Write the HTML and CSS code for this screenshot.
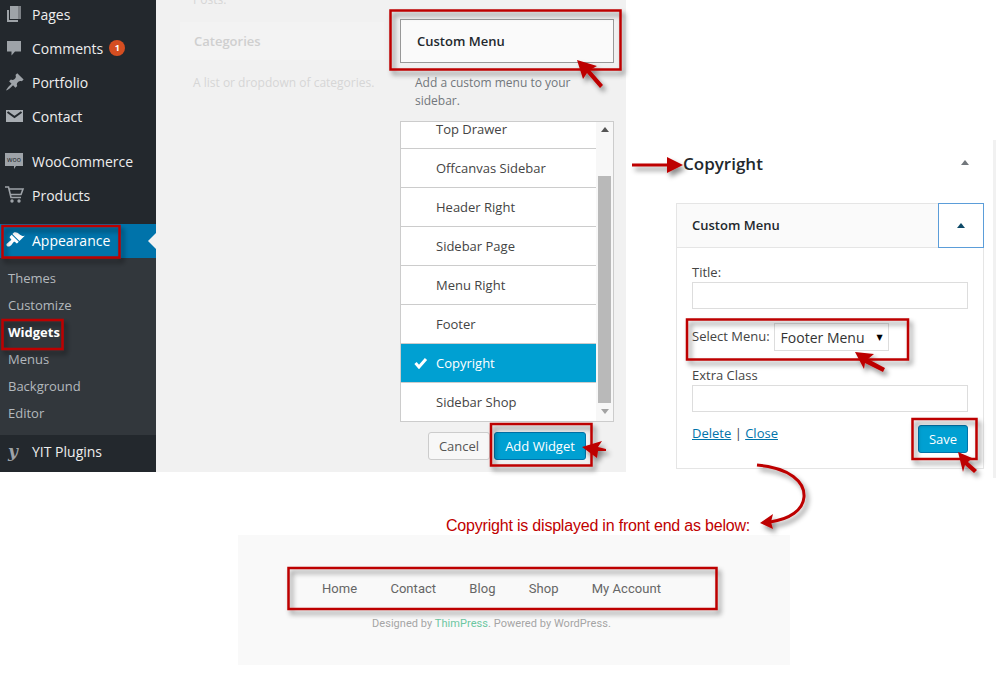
FILE: index.html
```html
<!DOCTYPE html>
<html>
<head>
  <title>Custom Menu widget</title>
  <link rel="stylesheet" href="styles.css">
</head>
<body>
<div class="page">

  <div class="top">
    <div class="sidebar">
      <ul class="menu">
        <li class="item"><span class="icon"><svg width="20" height="20" viewBox="0 0 20 20"><path d="M2 6h2v10h9v2H2z" fill="#9ea3a8"/><path d="M5 2h8v13H5z" fill="#9ea3a8"/><path d="M13 2h3v13h-3z" fill="#7d8186"/></svg></span>Pages</li>
        <li class="item"><span class="icon"><svg width="20" height="20" viewBox="0 0 20 20"><path d="M2 3h14v10.500H10l-3.500 4v-4H2z" fill="#9ea3a8"/></svg></span>Comments<span class="badge">1</span></li>
        <li class="item"><span class="icon"><svg width="20" height="20" viewBox="0 0 20 20"><path d="M10.440 3.020l1.820-1.820 6.360 6.350-1.830 1.820c-1.050-.68-2.480-.57-3.410.36l-.75.75c-.92.93-1.040 2.350-.35 3.410l-1.830 1.820-2.410-2.410-2.800 2.790c-.42.42-3.380 2.710-3.800 2.290s1.860-3.390 2.280-3.810l2.790-2.790L4.100 9.360l1.830-1.820c1.050.69 2.480.57 3.410-.36l.75-.75c.93-.92 1.040-2.350.35-3.410z" fill="#9ea3a8"/></svg></span>Portfolio</li>
        <li class="item"><span class="icon"><svg width="20" height="20" viewBox="0 0 20 20"><path d="M1 4h17v12H1z" fill="#a8adb2"/><path d="M2.500 6l7 5 7-5" fill="none" stroke="#23282d" stroke-width="2"/></svg></span>Contact</li>
        <li class="item item-gap"><span class="icon"><svg width="20" height="20" viewBox="0 0 20 20"><path d="M0 2h18v13h-7l-2 3v-3H0z" fill="#9ea3a8"/><text x="9" y="11" class="woo-text">woo</text></svg></span>WooCommerce</li>
        <li class="item"><span class="icon"><svg width="20" height="20" viewBox="0 0 20 20"><path d="M0 2h3.500l2.500 10.500h10M4.500 4H18l-2 5.500H5.500" fill="none" stroke="#9ea3a8" stroke-width="1.600"/><circle cx="7" cy="16" r="1.700" fill="#9ea3a8"/><circle cx="14" cy="16" r="1.700" fill="#9ea3a8"/></svg></span>Products</li>
      </ul>
      <div class="item item-low item-current"><span class="icon"><svg width="20" height="20" viewBox="0 0 20 20"><path d="M14.480 11.060L7.410 3.990l1.500-1.500c.5-.56 2.300-.47 3.510.32 1.210.8 1.430 1.280 2.910 2.100 1.180.64 2.450 1.260 4.450.85zm-.71.71L6.700 4.700 4.930 6.470c-.39.39-.39 1.020 0 1.410l1.060 1.060c.39.39.39 1.030 0 1.420-.6.6-1.430 1.110-2.210 1.690-.35.26-.7.53-1.010.84C1.430 13.230.88 14.940 2 16.030c1.100 1.100 2.800.56 4.140-.78.31-.31.58-.66.84-1.010.58-.78 1.090-1.610 1.690-2.210.39-.39 1.020-.39 1.410 0l1.060 1.060c.39.39 1.020.39 1.410 0z" fill="#fff"/></svg></span>Appearance</div>
      <ul class="submenu">
        <li>Themes</li>
        <li>Customize</li>
        <li class="sub-current">Widgets</li>
        <li>Menus</li>
        <li>Background</li>
        <li>Editor</li>
      </ul>
      <div class="item item-low"><span class="icon icon-yit">y</span>YIT Plugins</div>
    </div>

    <div class="widgets">
      <div class="available">
        <p class="faded-text">Posts.</p>
        <div class="faded-card">Categories</div>
        <p class="faded-text faded-desc">A list or dropdown of categories.</p>
      </div>
      <div class="chooser-col">
        <div class="widget-title">Custom Menu</div>
        <p class="widget-desc">Add a custom menu to your sidebar.</p>
        <div class="chooser">
          <ul class="rows">
            <li class="row row-first">Top Drawer</li>
            <li class="row">Offcanvas Sidebar</li>
            <li class="row">Header Right</li>
            <li class="row">Sidebar Page</li>
            <li class="row">Menu Right</li>
            <li class="row">Footer</li>
            <li class="row row-selected"><svg class="check" width="14" height="12" viewBox="0 0 14 12"><path d="M1.500 6l3.500 4 7-8" fill="none" stroke="#fff" stroke-width="3"/></svg>Copyright</li>
            <li class="row row-last">Sidebar Shop</li>
          </ul>
          <div class="scrollbar">
            <span class="arrow-up"></span>
            <span class="thumb"></span>
            <span class="arrow-down"></span>
          </div>
        </div>
        <div class="chooser-actions">
          <button class="btn">Cancel</button>
          <button class="btn btn-primary btn-add">Add Widget</button>
        </div>
      </div>
    </div>

    <div class="editor">
      <div class="sidebar-head">
        <h2>Copyright</h2>
        <span class="arrow-up arrow-head"></span>
      </div>
      <div class="card">
        <div class="card-head">
          <span class="card-title">Custom Menu</span>
          <span class="card-toggle"><span class="arrow-up arrow-dark"></span></span>
        </div>
        <div class="card-body">
          <label class="field-label">Title:</label>
          <div class="input"></div>
          <div class="select-row">
            <label>Select Menu:</label>
            <div class="select">Footer Menu<span class="caret">&#9660;</span></div>
          </div>
          <label class="field-label field-extra">Extra Class</label>
          <div class="input"></div>
          <div class="card-foot">
            <span class="links"><a href="#">Delete</a> | <a href="#">Close</a></span>
            <button class="btn btn-primary btn-save">Save</button>
          </div>
        </div>
      </div>
    </div>
  </div>

  <p class="caption">Copyright is displayed in front end as below:</p>

  <div class="front">
    <ul class="front-nav">
      <li>Home</li>
      <li>Contact</li>
      <li>Blog</li>
      <li>Shop</li>
      <li>My Account</li>
    </ul>
    <p class="front-credit">Designed by <span class="thim">ThimPress</span>. Powered by WordPress.</p>
  </div>

  <!-- red marks drawn over the screenshot -->
  <svg class="marks" width="1004" height="683" viewBox="0 0 1004 683">
    <defs>
      <filter id="shade" x="-20%" y="-20%" width="140%" height="140%">
        <feDropShadow dx="3" dy="4" stdDeviation="2.500" flood-color="#000" flood-opacity="0.45"/>
      </filter>
    </defs>
    <g filter="url(#shade)">
      <g class="frame">
        <rect x="390.500" y="10.500" width="230" height="59"/>
        <rect x="2.500" y="226" width="117" height="31.500"/>
        <rect x="2.500" y="320" width="60" height="29"/>
        <rect x="491" y="424" width="100.500" height="41.500"/>
        <rect x="687" y="319.500" width="221" height="40"/>
        <rect x="912.500" y="419" width="64" height="40"/>
        <rect x="288.500" y="568" width="428" height="41"/>
      </g>
      <g class="pointer">
        <path d="M577 60L597 66 590 70 603 85 600 88 587 73 583 79z"/>
        <path d="M582 447L602 441 598 447 606 449 606 451 598 451 597 458z"/>
        <path d="M632 163.500H667V157L683 165 667 173V166.500H632z"/>
        <path d="M855 352L874 354 868 359 885 368 883 372 865 363 864 369z"/>
        <path d="M958 452L972 458 968 462 977 470 974 473 965 465 963 472z"/>
        <path d="M760 523L773 514 771 522 773 529z"/>
      </g>
      <path class="curve" d="M757 465C790 468 805 482 804 497 803 510 790 519 770 522"/>
    </g>
  </svg>

</div>
</body>
</html>
```

FILE: styles.css
```css
body {
    margin: 0;
    background: #fff;
    font-family: "Open Sans", sans-serif;
    font-size: 13px;
    color: #444;
}

ul {
    margin: 0;
    padding: 0;
    list-style: none;
}

p {
    margin: 0;
}

.page {
    position: relative;
    width: 1004px;
    height: 683px;
    overflow: hidden;
}

.top {
    display: flex;
    align-items: flex-start;
    height: 478px;
}

/* admin menu */
.sidebar {
    width: 156px;
    height: 472px;
    overflow: hidden;
    flex-shrink: 0;
    background: #23282d;
}

.menu {
    margin-top: -3px;
    margin-bottom: 12px;
}

.item {
    display: flex;
    align-items: center;
    box-sizing: border-box;
    height: 34px;
    padding-left: 5px;
    font-size: 14px;
    color: #eee;
}

.item-gap {
    margin-top: 11px;
}

.item-low {
    padding-bottom: 2px;
}

.item-current {
    position: relative;
    background: #0073aa;
    color: #fff;
}

.item-current:after {
    content: "";
    position: absolute;
    right: 0;
    top: 9px;
    border: 8px solid transparent;
    border-right-color: #f1f1f1;
    border-left-width: 0;
}

.icon {
    display: flex;
    width: 27px;
    flex-shrink: 0;
}

.icon-yit {
    box-sizing: border-box;
    width: 23px;
    margin-right: 4px;
    padding-left: 3px;
    font-family: "DejaVu Serif", serif;
    font-style: italic;
    font-weight: bold;
    font-size: 17px;
    color: #9ea3a8;
}

.woo-text {
    font-family: "Open Sans", sans-serif;
    font-size: 7px;
    text-anchor: middle;
    fill: #23282d;
}

.badge {
    width: 16px;
    height: 16px;
    margin-left: 6px;
    border-radius: 50%;
    background: #d54e21;
    color: #fff;
    font-size: 9px;
    font-weight: 700;
    line-height: 16px;
    text-align: center;
}

.submenu {
    padding: 7px 0 8px 8px;
    background: #32373c;
    color: #b4b9be;
}

.submenu li {
    height: 27px;
    line-height: 27px;
}

.submenu .sub-current {
    color: #fff;
    font-weight: 700;
}

/* widgets screen */
.widgets {
    display: flex;
    width: 470px;
    height: 472px;
    flex-shrink: 0;
    box-sizing: border-box;
    padding-left: 24px;
    overflow: hidden;
    background: #f1f1f1;
}

.available {
    width: 204px;
    margin-right: 16px;
    flex-shrink: 0;
}

.faded-text {
    margin-top: -10px;
    padding-left: 13px;
    font-size: 12px;
    line-height: 20px;
    color: #d6d6d6;
}

.faded-desc {
    margin-top: 13px;
}

.faded-card {
    height: 38px;
    margin-top: 12px;
    padding-left: 14px;
    background: #f3f3f3;
    line-height: 38px;
    font-weight: 600;
    color: #cfcfcf;
}

.chooser-col {
    width: 214px;
    margin-top: 19px;
    flex-shrink: 0;
}

.widget-title {
    box-sizing: border-box;
    height: 44px;
    padding-left: 16px;
    border: 1px solid #999;
    background: #fafafa;
    line-height: 42px;
    font-weight: 600;
    color: #23282d;
}

.widget-desc {
    width: 190px;
    margin: 11px 0 11px 15px;
    font-size: 12px;
    line-height: 18px;
    color: #72777c;
}

.chooser {
    display: flex;
    height: 301px;
    box-sizing: border-box;
    border: 1px solid #ccc;
    background: #fff;
}

.rows {
    width: 195px;
}

.row {
    position: relative;
    box-sizing: border-box;
    height: 39px;
    padding-left: 35px;
    border-bottom: 1px solid #ccc;
    line-height: 38px;
}

.row-first {
    height: 27px;
    line-height: 14px;
}

.row-last {
    border-bottom: 0;
}

.row-selected {
    background: #00a0d2;
    color: #fff;
}

.check {
    position: absolute;
    left: 13px;
    top: 13px;
}

.scrollbar {
    display: flex;
    flex-direction: column;
    align-items: center;
    width: 17px;
    padding-top: 5px;
    background: #f7f7f7;
}

.arrow-up,
.arrow-down {
    width: 0;
    height: 0;
    border-left: 4px solid transparent;
    border-right: 4px solid transparent;
}

.arrow-up {
    border-bottom: 5px solid #555;
}

.arrow-down {
    border-top: 5px solid #a3a3a3;
}

.thumb {
    width: 13px;
    height: 227px;
    margin: 44px 0 6px;
    background: #b9b9b9;
}

.chooser-actions {
    display: flex;
    justify-content: flex-end;
    gap: 4px;
    margin-top: 10px;
    padding-right: 28px;
}

.btn {
    box-sizing: border-box;
    height: 28px;
    padding: 0;
    border: 1px solid #ccc;
    border-radius: 3px;
    background: #f7f7f7;
    font-family: "Open Sans", sans-serif;
    font-size: 13px;
    color: #555;
}

.chooser-actions .btn {
    width: 62px;
}

.chooser-actions .btn-add {
    width: 92px;
}

.btn-primary {
    border-color: #0073aa;
    background: #00a0d2;
    color: #fff;
}

.chooser-actions .btn-primary {
    color: #fff;
}

.btn-save {
    width: 50px;
}

/* sidebar area on the right */
.editor {
    box-sizing: border-box;
    width: 320px;
    height: 338px;
    margin: 140px 0 0 50px;
    padding-top: 14px;
    border-right: 3px solid #f1f1f1;
}

.sidebar-head {
    display: flex;
    justify-content: space-between;
    align-items: center;
    width: 286px;
    height: 20px;
    margin-bottom: 29px;
    padding-left: 7px;
}

.sidebar-head h2 {
    margin: 0;
    font-size: 17px;
    font-weight: 600;
    line-height: 20px;
    color: #23282d;
}

.arrow-head {
    margin-top: -4px;
    border-bottom-color: #72777c;
}

.card {
    box-sizing: border-box;
    width: 308px;
    height: 266px;
    border: 1px solid #e5e5e5;
}

.card-head {
    display: flex;
    justify-content: space-between;
    height: 43px;
    border-bottom: 1px solid #e5e5e5;
    background: #fafafa;
}

.card-title {
    padding-left: 15px;
    line-height: 43px;
    font-weight: 600;
    color: #23282d;
}

.card-toggle {
    display: flex;
    justify-content: center;
    align-items: center;
    box-sizing: border-box;
    width: 46px;
    height: 45px;
    margin-right: -1px;
    margin-top: -1px;
    border: 1px solid #5b9dd9;
    background: #fff;
}

.arrow-dark {
    border-bottom-color: #0e4a68;
}

.card-body {
    padding: 15px 15px 0;
}

.field-label {
    display: block;
    margin-bottom: 1px;
    line-height: 18px;
}

.field-extra {
    margin-top: 15px;
}

.input {
    box-sizing: border-box;
    width: 276px;
    height: 27px;
    border: 1px solid #ddd;
}

.select-row {
    display: flex;
    align-items: center;
    margin-top: 14px;
}

.select-row label {
    margin-right: 4px;
    margin-top: -2px;
}

.select {
    display: flex;
    justify-content: space-between;
    box-sizing: border-box;
    width: 115px;
    height: 28px;
    padding: 0 5px 0 6px;
    border: 1px solid #ddd;
    line-height: 27px;
    font-size: 14px;
    color: #333;
}

.caret {
    font-family: "DejaVu Sans", sans-serif;
    font-size: 8px;
    line-height: 28px;
    color: #000;
}

.card-foot {
    display: flex;
    justify-content: space-between;
    align-items: flex-start;
    margin-top: 13px;
}

.links {
    line-height: 16px;
}

.links a {
    color: #0073aa;
}

/* front end preview */
.caption {
    margin: 39px 0 0 446px;
    font-family: "Liberation Sans", Arial, sans-serif;
    font-size: 16px;
    letter-spacing: -0.200px;
    line-height: 18px;
    color: #c00000;
}

.front {
    box-sizing: border-box;
    width: 552px;
    height: 130px;
    margin-left: 238px;
    padding: 45px 0 0 84px;
    background: #f9f9f9;
}

.front-nav {
    display: flex;
    gap: 33.200px;
    font-family: Roboto, sans-serif;
    font-size: 13px;
    letter-spacing: 0.050px;
    line-height: 18px;
    color: #666;
}

.front-credit {
    margin: 18px 0 0 50px;
    font-family: Roboto, sans-serif;
    font-size: 11px;
    letter-spacing: 0.050px;
    line-height: 16px;
    color: #a5a5a5;
}

.thim {
    color: #6cc7a1;
}

/* annotations */
.marks {
    position: absolute;
    left: 0;
    top: 0;
}

.frame rect {
    fill: none;
    stroke: #bd0000;
    stroke-width: 2.500;
}

.pointer path {
    fill: #bd0000;
}

.curve {
    fill: none;
    stroke: #bd0000;
    stroke-width: 3;
}
```
